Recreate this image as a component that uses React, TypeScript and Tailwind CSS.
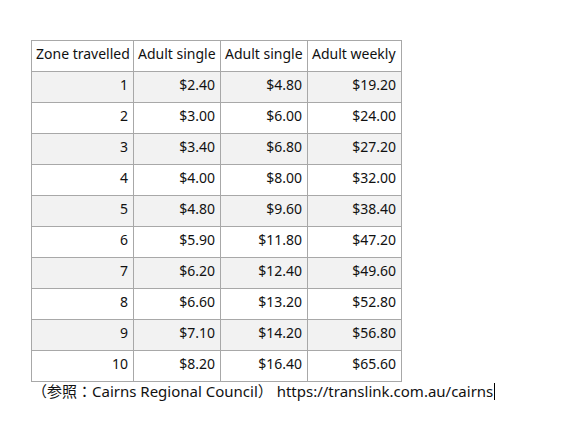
const rows = [
  ["1", "$2.40", "$4.80", "$19.20"],
  ["2", "$3.00", "$6.00", "$24.00"],
  ["3", "$3.40", "$6.80", "$27.20"],
  ["4", "$4.00", "$8.00", "$32.00"],
  ["5", "$4.80", "$9.60", "$38.40"],
  ["6", "$5.90", "$11.80", "$47.20"],
  ["7", "$6.20", "$12.40", "$49.60"],
  ["8", "$6.60", "$13.20", "$52.80"],
  ["9", "$7.10", "$14.20", "$56.80"],
  ["10", "$8.20", "$16.40", "$65.60"],
];

export default function App() {
  return (
    <div
      className="min-h-screen w-[563px] bg-white pl-[31px] pt-[40px] text-[14px] text-[#111]"
      style={{ fontFamily: '"Noto Sans", "Noto Sans CJK JP", sans-serif' }}
    >
      <table className="w-[370px] table-fixed border-collapse whitespace-nowrap">
        <colgroup>
          <col className="w-[102px]" />
          <col className="w-[87px]" />
          <col className="w-[87px]" />
          <col className="w-[94px]" />
        </colgroup>
        <thead>
          <tr className="h-[31px]">
            <th className="border border-[#a8a8a8] px-[4px] pb-[5px] text-left font-normal">Zone travelled</th>
            <th className="border border-[#a8a8a8] px-[4px] pb-[5px] text-left font-normal">Adult single</th>
            <th className="border border-[#a8a8a8] px-[4px] pb-[5px] text-left font-normal">Adult single</th>
            <th className="border border-[#a8a8a8] px-[4px] pb-[5px] text-left font-normal">Adult weekly</th>
          </tr>
        </thead>
        <tbody>
          {rows.map((r, i) => (
            <tr key={r[0]} className={i % 2 === 0 ? "h-[31px] bg-[#f2f2f2]" : "h-[31px] bg-white"}>
              {r.map((c, j) => (
                <td key={j} className="border border-[#a8a8a8] px-[5px] pb-[5px] text-right">
                  {c}
                </td>
              ))}
            </tr>
          ))}
        </tbody>
      </table>
      <p className="-mt-[2px] pl-[1px] text-[15px] leading-[20px]">
        （参照：Cairns Regional Council） https://translink.com.au/cairns
        <span className="ml-[1px] inline-block h-[17px] w-[1px] translate-y-[3px] bg-black" />
      </p>
    </div>
  );
}
